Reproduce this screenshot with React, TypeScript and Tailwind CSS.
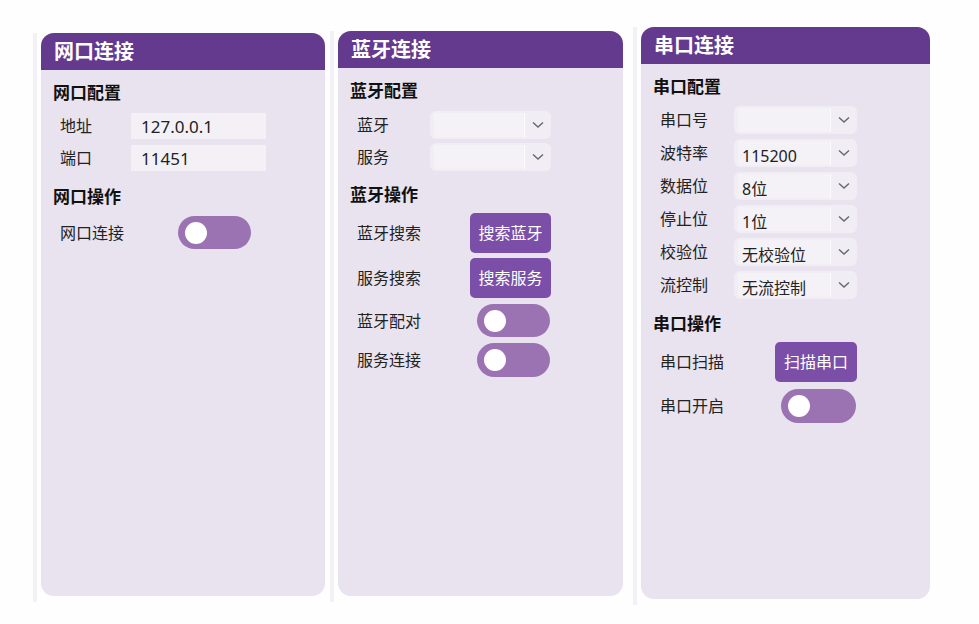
import type { ReactNode } from 'react'

const font = { fontFamily: '"Noto Sans", "Noto Sans CJK SC", sans-serif' }

function Card({ title, w, h, children }: { title: string; w: string; h: string; children: ReactNode }) {
    return (
        <div className={`${w} ${h} rounded-[13px] bg-[#e8e3ee] overflow-hidden flex flex-col`}>
            <div className="h-[37px] shrink-0 bg-[#633a8e] text-white font-bold text-[20px] pl-[13px] flex items-center">
                {title}
            </div>
            <div className="flex flex-col pl-[12px]">{children}</div>
        </div>
    )
}

function Heading({ children, className = '' }: { children: ReactNode; className?: string }) {
    return <div className={`text-[17px] leading-[22px] font-bold text-[#111] ${className}`}>{children}</div>
}

function Row({ label, ctrl, className = '', children }: { label: string; ctrl: string; className?: string; children: ReactNode }) {
    return (
        <div className={`flex items-center ${className}`}>
            <div className={`${ctrl} pl-[7px] text-[16px] text-[#222] shrink-0`}>{label}</div>
            {children}
        </div>
    )
}

function Select({ value = '', w }: { value?: string; w: string }) {
    return (
        <div className={`${w} h-[28px] rounded-[6px] bg-[#f0edf4] flex items-stretch py-[2px] pl-[4px]`}>
            <div className="flex-1 bg-[#f4f2f7] border-r border-[#fbfafc] text-[16px] text-[#222] pl-[4px] pt-[4px] leading-[22px]">
                {value}
            </div>
            <div className="w-[26px] flex items-center justify-center">
                <svg width="12" height="8" viewBox="0 0 12 8" fill="none">
                    <path d="M1 1.5 L6 6 L11 1.5" stroke="#6b6b6b" strokeWidth="1.5" />
                </svg>
            </div>
        </div>
    )
}

function Input({ value }: { value: string }) {
    return (
        <div className="w-[135px] h-[26px] bg-[#f3f1f6] text-[17px] text-[#222] pl-[10px] leading-[26px] pt-[1px]">{value}</div>
    )
}

function Button({ text, w }: { text: string; w: string }) {
    return (
        <div className={`${w} h-[40px] rounded-[5px] bg-[#7b4fa8] text-white text-[16px] flex items-center justify-center`}>
            {text}
        </div>
    )
}

function Toggle({ w = 'w-[73px]', h = 'h-[33px]' }: { w?: string; h?: string }) {
    return (
        <div className={`${w} ${h} rounded-full bg-[#9b73b3] flex items-center pl-[7px]`}>
            <div className="w-[22px] h-[22px] rounded-full bg-white" />
        </div>
    )
}

function Column({ mt, children }: { mt: string; children: ReactNode }) {
    return (
        <div className={`flex gap-[4px] ${mt}`}>
            <div className="w-[4px] bg-[#f3f0f6] mb-[-6px]" />
            {children}
        </div>
    )
}

export default function App() {
    return (
        <div className="w-[979px] h-[624px] bg-[#fefefe] flex items-start pl-[33px]" style={font}>
            <Column mt="mt-[33px]">
                <Card title="网口连接" w="w-[284px]" h="h-[563px]">
                    <Heading className="mt-[12px]">网口配置</Heading>
                    <Row label="地址" ctrl="w-[78px]" className="mt-[9px]">
                        <Input value="127.0.0.1" />
                    </Row>
                    <Row label="端口" ctrl="w-[78px]" className="mt-[6px]">
                        <Input value="11451" />
                    </Row>
                    <Heading className="mt-[15px]">网口操作</Heading>
                    <Row label="网口连接" ctrl="w-[125px]" className="mt-[8px]">
                        <Toggle />
                    </Row>
                </Card>
            </Column>
            <div className="w-[5px]" />
            <Column mt="mt-[31px]">
                <Card title="蓝牙连接" w="w-[285px]" h="h-[565px]">
                    <Heading className="mt-[12px]">蓝牙配置</Heading>
                    <Row label="蓝牙" ctrl="w-[80px]" className="mt-[9px]">
                        <Select w="w-[121px]" />
                    </Row>
                    <Row label="服务" ctrl="w-[80px]" className="mt-[4px]">
                        <Select w="w-[121px]" />
                    </Row>
                    <Heading className="mt-[13px]">蓝牙操作</Heading>
                    <Row label="蓝牙搜索" ctrl="w-[120px]" className="mt-[7px]">
                        <Button text="搜索蓝牙" w="w-[81px]" />
                    </Row>
                    <Row label="服务搜索" ctrl="w-[120px]" className="mt-[5px]">
                        <Button text="搜索服务" w="w-[81px]" />
                    </Row>
                    <Row label="蓝牙配对" ctrl="w-[127px]" className="mt-[6px]">
                        <Toggle />
                    </Row>
                    <Row label="服务连接" ctrl="w-[127px]" className="mt-[6px]">
                        <Toggle h="h-[34px]" />
                    </Row>
                </Card>
            </Column>
            <div className="w-[10px]" />
            <Column mt="mt-[27px]">
                <Card title="串口连接" w="w-[289px]" h="h-[572px]">
                    <Heading className="mt-[12px]">串口配置</Heading>
                    <Row label="串口号" ctrl="w-[81px]" className="mt-[8px]">
                        <Select w="w-[123px]" />
                    </Row>
                    <Row label="波特率" ctrl="w-[81px]" className="mt-[5px]">
                        <Select w="w-[123px]" value="115200" />
                    </Row>
                    <Row label="数据位" ctrl="w-[81px]" className="mt-[5px]">
                        <Select w="w-[123px]" value="8位" />
                    </Row>
                    <Row label="停止位" ctrl="w-[81px]" className="mt-[5px]">
                        <Select w="w-[123px]" value="1位" />
                    </Row>
                    <Row label="校验位" ctrl="w-[81px]" className="mt-[5px]">
                        <Select w="w-[123px]" value="无校验位" />
                    </Row>
                    <Row label="流控制" ctrl="w-[81px]" className="mt-[5px]">
                        <Select w="w-[123px]" value="无流控制" />
                    </Row>
                    <Heading className="mt-[14px]">串口操作</Heading>
                    <Row label="串口扫描" ctrl="w-[122px]" className="mt-[7px]">
                        <Button text="扫描串口" w="w-[82px]" />
                    </Row>
                    <Row label="串口开启" ctrl="w-[128px]" className="mt-[7px]">
                        <Toggle w="w-[75px]" h="h-[34px]" />
                    </Row>
                </Card>
            </Column>
        </div>
    )
}
